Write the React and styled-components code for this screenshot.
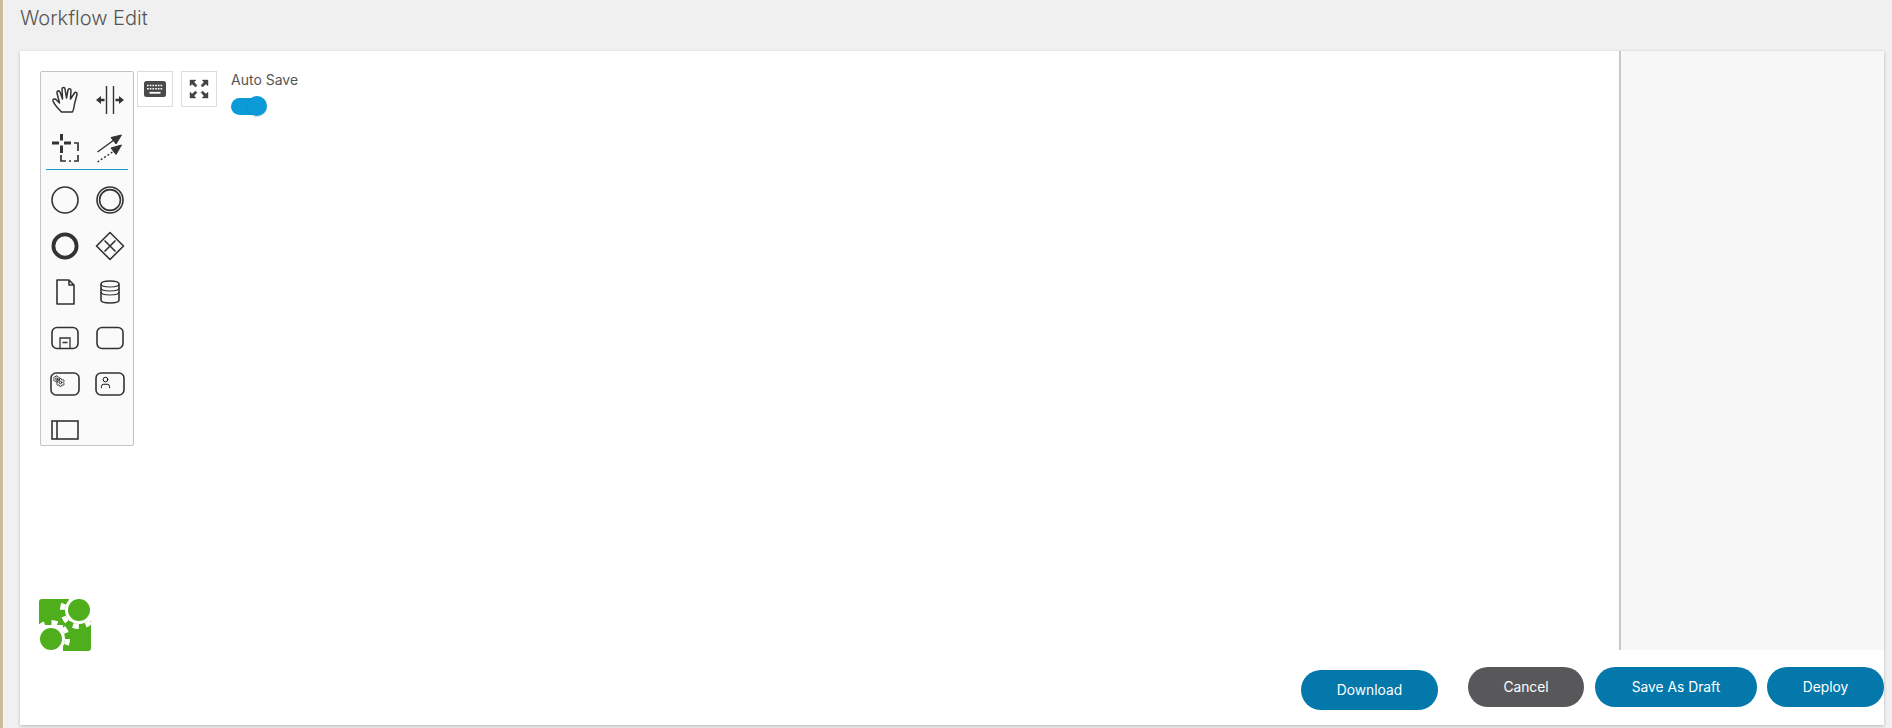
import React from "react"
import styled, { createGlobalStyle } from "styled-components"
import { Settings, User } from "lucide-react"

const GlobalStyle = createGlobalStyle`
    html, body {
        margin: 0;
        padding: 0;
        height: 100%;
        overflow: hidden;
        font-family: "Inter", "Liberation Sans", sans-serif;
    }
`

const ink = "#333"
const green = "#4fae1c"

const Shape = ({ children }) => (
    <svg width="34" height="34" viewBox="0 0 34 34" fill="none" stroke={ink} strokeWidth="1.6">
        {children}
    </svg>
)

const paletteIcons = [
    <Shape><circle cx="17" cy="17" r="13" /></Shape>,
    <Shape><circle cx="17" cy="17" r="13" /><circle cx="17" cy="17" r="10.4" /></Shape>,
    <Shape><circle cx="17" cy="17" r="11.6" strokeWidth="3.8" /></Shape>,
    <Shape>
        <path d="M17 3.5 L30.5 17 L17 30.5 L3.5 17 Z" strokeLinejoin="round" />
        <path d="M11.5 11.5 L22.5 22.5 M22.5 11.5 L11.5 22.5" />
    </Shape>,
    <Shape><path d="M9 5 H21 L26 10 V29 H9 Z M21 5 V10 H26" strokeLinejoin="round" /></Shape>,
    <Shape>
        <path d="M8 9 C8 5 26 5 26 9 V25 C26 29 8 29 8 25 Z" />
        <path d="M8 9 C8 13 26 13 26 9 M8 13 C8 17 26 17 26 13 M8 17 C8 21 26 21 26 17" strokeWidth="1.1" />
    </Shape>,
    <Shape>
        <rect x="4" y="6.5" width="26" height="21" rx="5" />
        <path d="M12 27 V17 H22 V27 M14.5 21.5 H19.5" strokeWidth="1.3" />
    </Shape>,
    <Shape><rect x="4" y="6.5" width="26" height="21" rx="5" /></Shape>,
    <Shape>
        <rect x="3" y="6" width="28" height="22" rx="5" />
        <Settings x="4.5" y="8" width="8" height="8" strokeWidth="2" />
        <Settings x="7.5" y="10.5" width="10" height="10" strokeWidth="1.8" />
    </Shape>,
    <Shape>
        <rect x="3" y="6" width="28" height="22" rx="5" />
        <User x="5.5" y="8.5" width="14" height="14" strokeWidth="1.6" />
    </Shape>,
    <Shape>
        <rect x="4" y="8" width="26" height="18" />
        <path d="M9 8 V26" />
    </Shape>,
]

const App = () => {
    return (
        <Page>
            <GlobalStyle />
            <SideStrip />
            <Content>
                <Title>Workflow Edit</Title>
                <Card>
                    <Body>
                        <Canvas>
                            <TopArea>
                                <Palette>
                                    <ToolGrid>
                                        <Cell>
                                            <svg width="34" height="34" viewBox="0 0 34 34" fill="none" stroke={ink} strokeWidth="1.5" strokeLinejoin="round">
                                                <path transform="translate(1.5 0)" d="M12 29 C9 26 5 22 3.5 18 C3 16 5.5 15 7 17 L10 20 L7.5 10 C7 8 9.5 7 10.5 9 L13 16 L12.5 6 C12.5 4 15.5 4 15.5 6 L17 15 L18.5 7 C19 5 21.5 5.5 21.5 7.5 L21 16 L25 10 C26 8.5 28 9.5 27.5 11.5 L25 21 C24.5 25 24 27 23 29 Z" />
                                            </svg>
                                        </Cell>
                                        <Cell>
                                            <svg width="34" height="34" viewBox="0 0 34 34" fill={ink}>
                                                <path d="M13.5 3 V31 M20.5 3 V31" stroke={ink} strokeWidth="1.4" />
                                                <path d="M3 17 L8 13 V21 Z M31 17 L26 13 V21 Z" />
                                                <path d="M7 15.8 H11.5 V18.2 H7 Z M22.5 15.8 H27 V18.2 H22.5 Z" />
                                            </svg>
                                        </Cell>
                                        <Cell>
                                            <svg width="34" height="34" viewBox="0 0 34 34" fill="none" stroke={ink}>
                                                <path d="M4 14 H11 M16 14 H23 M13.5 5 V11.5 M13.5 16.5 V24" strokeWidth="3" />
                                                <path d="M13 26 V32 H18 M21 32 H23 M26 32 H30 V26 M30 22 V14 H26" strokeWidth="1.7" />
                                            </svg>
                                        </Cell>
                                        <Cell>
                                            <svg width="34" height="34" viewBox="0 0 34 34" fill={ink} stroke={ink}>
                                                <path d="M4.5 23 L21 11" strokeWidth="1.5" />
                                                <path d="M28.5 6 L18 8.5 L23 15 Z" />
                                                <path d="M4.5 33 L21 22" strokeWidth="1.4" strokeDasharray="2 2" />
                                                <path d="M28.5 16 L18 19 L23 25.5 Z" />
                                            </svg>
                                        </Cell>
                                    </ToolGrid>
                                    <Divider />
                                    <ToolGrid>
                                        {paletteIcons.map((icon, index) => (
                                            <Cell key={index}>{icon}</Cell>
                                        ))}
                                    </ToolGrid>
                                </Palette>
                                <SquareButton>
                                    <svg width="24" height="18" viewBox="0 0 24 18">
                                        <rect x="1" y="1" width="22" height="16" rx="2.5" fill="#4a4a4a" />
                                        <path d="M4 5.5 H20 M4 8.7 H20" stroke="#fff" strokeWidth="1.6" strokeDasharray="1.7 1" />
                                        <path d="M6.5 12.8 H17.5" stroke="#fff" strokeWidth="1.8" />
                                    </svg>
                                </SquareButton>
                                <SquareButton $gap>
                                    <svg width="20" height="20" viewBox="0 0 20 20" fill="#444" stroke="#444">
                                        <path d="M1 1 H7 L5 3 L8 6.5 L6.5 8 L3 5 L1 7 Z" strokeWidth="0.4" />
                                        <path d="M19 1 H13 L15 3 L12 6.5 L13.5 8 L17 5 L19 7 Z" strokeWidth="0.4" />
                                        <path d="M1 19 H7 L5 17 L8 13.5 L6.5 12 L3 15 L1 13 Z" strokeWidth="0.4" />
                                        <path d="M19 19 H13 L15 17 L12 13.5 L13.5 12 L17 15 L19 13 Z" strokeWidth="0.4" />
                                    </svg>
                                </SquareButton>
                                <AutoSave>
                                    <AutoSaveLabel>Auto Save</AutoSaveLabel>
                                    <Toggle><Knob /></Toggle>
                                </AutoSave>
                            </TopArea>
                            <Logo>
                                <svg width="52" height="52" viewBox="0 0 52 52">
                                    <path d="M3 0 H30 V26 H0 V3 A3 3 0 0 1 3 0 Z" fill={green} />
                                    <path d="M24 22 H52 V49 A3 3 0 0 1 49 52 H24 Z" fill={green} />
                                    <circle cx="40" cy="11" r="14" fill="#fff" />
                                    <circle cx="40" cy="11" r="16.5" fill="none" stroke="#fff" strokeWidth="5" strokeDasharray="6 6.96" />
                                    <circle cx="40" cy="11" r="11" fill={green} />
                                    <circle cx="12" cy="40" r="14" fill="#fff" />
                                    <circle cx="12" cy="40" r="16.5" fill="none" stroke="#fff" strokeWidth="5" strokeDasharray="6 6.96" />
                                    <circle cx="12" cy="40" r="11" fill={green} />
                                </svg>
                            </Logo>
                        </Canvas>
                        <SidePanel />
                    </Body>
                    <Footer>
                        <DownloadButton>Download</DownloadButton>
                        <CancelButton>Cancel</CancelButton>
                        <PillButton $width="162px">Save As Draft</PillButton>
                        <PillButton $width="117px">Deploy</PillButton>
                    </Footer>
                </Card>
            </Content>
        </Page>
    )
}

const Page = styled.div`
    display: flex;
    width: 1892px;
    height: 728px;
    overflow: hidden;
    background-color: #f0f0f0;
`
const SideStrip = styled.div`
    width: 3px;
    background-color: #c9bd9b;
    border-right: 1px solid #f7f7f7;
`
const Content = styled.main`
    flex: 1;
    display: flex;
    flex-direction: column;
    padding: 0 8px 3px 16px;
    min-width: 0;
`
const Title = styled.h1`
    height: 51px;
    margin: 0;
    padding-top: 6px;
    box-sizing: border-box;
    font-size: 20px;
    font-weight: 300;
    line-height: 24px;
    color: #555;
`
const Card = styled.section`
    flex: 1;
    display: flex;
    flex-direction: column;
    background-color: #fff;
    box-shadow: 0 1px 3px rgba(0, 0, 0, 0.25);
`
const Body = styled.div`
    flex: 1;
    display: flex;
    min-height: 0;
`
const Canvas = styled.div`
    flex: 1;
    display: flex;
    flex-direction: column;
    padding: 20px 0 0 20px;
    min-width: 0;
`
const TopArea = styled.div`
    display: flex;
    align-items: flex-start;
`
const Palette = styled.div`
    width: 94px;
    height: 375px;
    box-sizing: border-box;
    padding: 5px 0 0 1px;
    background-color: #fafafa;
    border: 1px solid #c4c4c4;
    border-radius: 2px;
`
const ToolGrid = styled.div`
    display: grid;
    grid-template-columns: 45.5px 45.5px;
    grid-auto-rows: 46px;
`
const Cell = styled.div`
    display: flex;
    align-items: center;
    justify-content: center;
`
const Divider = styled.div`
    height: 1px;
    margin: 0 5px 7px 4px;
    background-color: #1b9ac4;
`
const SquareButton = styled.div`
    width: 36px;
    height: 36px;
    box-sizing: border-box;
    margin-left: ${props => props.$gap ? "8px" : "3px"};
    display: flex;
    align-items: center;
    justify-content: center;
    background-color: #fff;
    border: 1px solid #dcdcdc;
`
const AutoSave = styled.div`
    margin-left: 14px;
`
const AutoSaveLabel = styled.div`
    font-size: 14px;
    line-height: 17px;
    color: #555;
`
const Toggle = styled.div`
    position: relative;
    width: 35px;
    height: 17px;
    margin-top: 10px;
    border-radius: 9px;
    background-color: #0a9bd8;
`
const Knob = styled.div`
    position: absolute;
    top: -2px;
    right: -1px;
    width: 20px;
    height: 20px;
    border-radius: 50%;
    background-color: #0a9bd8;
    box-shadow: 0 1px 2px rgba(0, 0, 0, 0.15);
`
const Logo = styled.div`
    margin-top: auto;
    margin-bottom: -1px;
    margin-left: -1px;
    line-height: 0;
`
const SidePanel = styled.aside`
    width: 263px;
    background-color: #f7f7f7;
    border-left: 2px solid #c8c8c8;
`
const Footer = styled.footer`
    height: 75px;
    box-sizing: border-box;
    display: flex;
    justify-content: flex-end;
    align-items: flex-start;
    padding-top: 17px;
    gap: 10px;
`
const PillButton = styled.button`
    width: ${props => props.$width};
    height: 40px;
    padding: 0;
    border: none;
    border-radius: 20px;
    background-color: #0478ab;
    color: #fff;
    font-family: inherit;
    font-size: 13.8px;
`
const CancelButton = styled(PillButton)`
    width: 116px;
    margin-right: 1px;
    background-color: #58585b;
`
const DownloadButton = styled(PillButton)`
    width: 137px;
    margin-top: 3px;
    margin-right: 20px;
`

export default App
